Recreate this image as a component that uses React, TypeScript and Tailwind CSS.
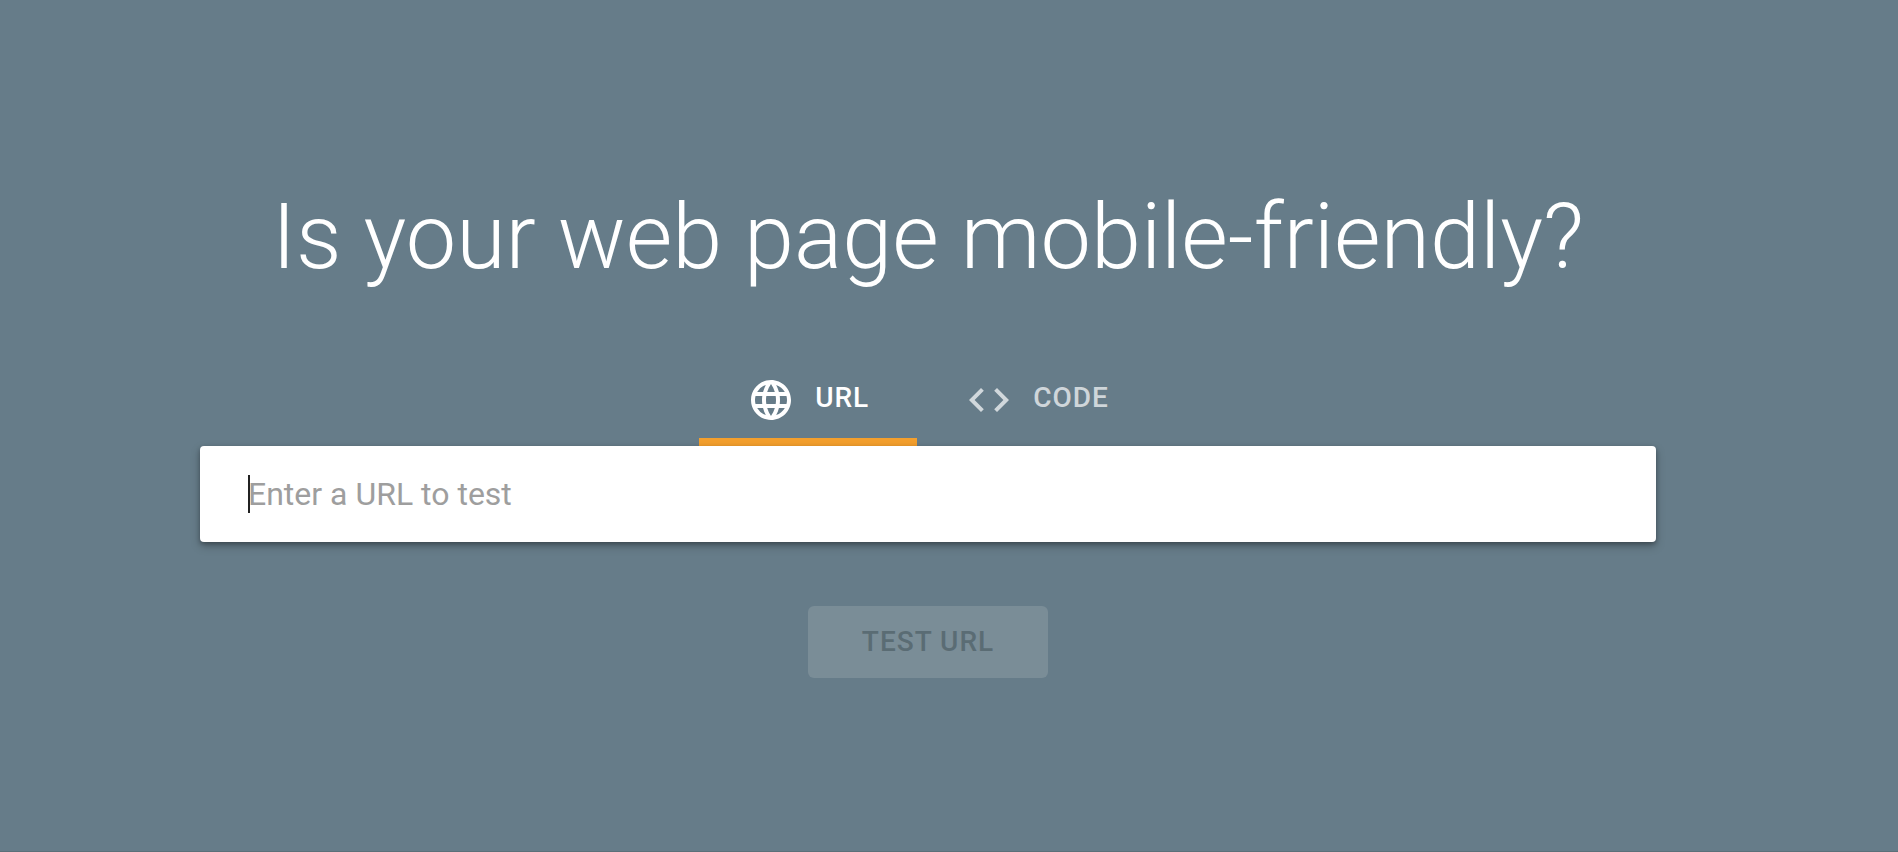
import { useState } from "react";
import { MdCode, MdLanguage } from "react-icons/md";

type Mode = "url" | "code";

export default function App() {
  const [mode, setMode] = useState<Mode>("url");
  const [value, setValue] = useState("");
  const tabs = [
    { id: "url" as Mode, label: "URL", Icon: MdLanguage },
    { id: "code" as Mode, label: "CODE", Icon: MdCode },
  ];

  return (
    <main className="flex min-h-screen flex-col items-center border-b border-[#5b7079] bg-[#667c89] pr-[242px] pl-[200px] pt-[178px] font-['Roboto',sans-serif]">
      <h1 className="text-center text-[90px] leading-[120px] font-light text-white">
        Is your web page mobile-friendly?
      </h1>
      <div role="tablist" className="mt-[64px] flex h-[84px]">
        {tabs.map(({ id, label, Icon }) => (
          <button
            key={id}
            type="button"
            role="tab"
            aria-selected={mode === id}
            onClick={() => setMode(id)}
            className={`flex items-center gap-[20px] border-b-8 px-[48px] pb-1 text-[28px] leading-[32px] font-medium tracking-[1px] ${
              mode === id ? "border-[#f39f2d] text-white" : "border-transparent text-white/70"
            }`}
          >
            <Icon className="mt-1 size-[48px]" aria-hidden="true" />
            {label}
          </button>
        ))}
      </div>
      <form className="flex w-full flex-col items-center" onSubmit={(e) => e.preventDefault()}>
        <div className="relative w-full">
          <input
            type="text"
            aria-label="Enter a URL to test"
            placeholder="Enter a URL to test"
            autoFocus
            value={value}
            onChange={(e) => setValue(e.target.value)}
            className="h-[96px] w-full rounded bg-white px-[48px] text-[32px] text-[#212121] caret-[#212121] shadow-[0_4px_10px_rgba(0,0,0,0.25),0_2px_4px_rgba(0,0,0,0.25)] outline-none placeholder:text-[#9e9e9e] placeholder-shown:caret-transparent"
          />
          {!value && (
            <span
              aria-hidden="true"
              className="pointer-events-none absolute top-[29px] left-[48px] h-[38px] w-[2px] bg-[#212121]"
            />
          )}
        </div>
        <button
          type="submit"
          disabled={!value}
          className="mt-[64px] h-[72px] w-[240px] rounded-md bg-[#7a8d97] text-[28px] font-medium tracking-[1px] text-[#5a6c74]"
        >
          TEST URL
        </button>
      </form>
    </main>
  );
}
